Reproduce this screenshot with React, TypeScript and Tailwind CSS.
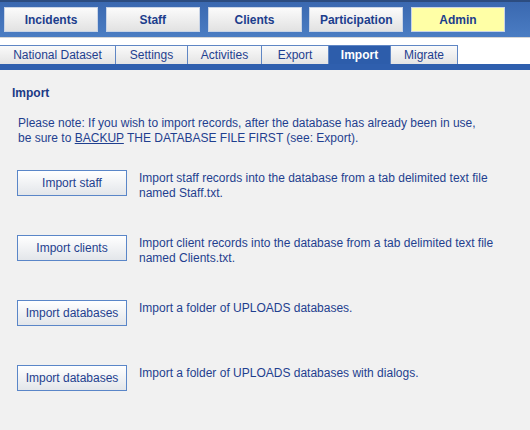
import React from 'react';

const topButtons = ['Incidents', 'Staff', 'Clients', 'Participation', 'Admin'];

const tabs = [
  { label: 'National Dataset', w: 'w-[116px]' },
  { label: 'Settings', w: 'w-[72px]' },
  { label: 'Activities', w: 'w-[74px]' },
  { label: 'Export', w: 'w-[67px]' },
  { label: 'Import', w: 'w-[62px]' },
  { label: 'Migrate', w: 'w-[67px]' },
];

const imports = [
  {
    button: 'Import staff',
    text: 'Import staff records into the database from a tab delimited text file named Staff.txt.',
  },
  {
    button: 'Import clients',
    text: 'Import client records into the database from a tab delimited text file named Clients.txt.',
  },
  { button: 'Import databases', text: 'Import a folder of UPLOADS databases.' },
  { button: 'Import databases', text: 'Import a folder of UPLOADS databases with dialogs.' },
];

const App: React.FC = () => {
  return (
    <div
      className="w-[530px] h-[430px] overflow-hidden bg-[#f1f1f1] text-[#1f3f8f]"
      style={{ fontFamily: '"Liberation Sans", Arial, sans-serif' }}
    >
      {/* main menu */}
      <div className="h-[37px] border-t-2 border-[#2c4c80] bg-gradient-to-b from-[#3a68b0] to-[#4b7dc3] flex items-start pt-[5px] pl-[4px] gap-[7.75px]">
        {topButtons.map((b) => (
          <div
            key={b}
            className={`w-[94px] h-[25px] flex items-center justify-center text-[12px] font-bold text-[#1c3d8c] border border-[#c9d4e6] ${
              b === 'Admin' ? 'bg-[#ffffa6]' : 'bg-gradient-to-b from-[#fbfbfb] to-[#e2e2e2]'
            }`}
          >
            {b}
          </div>
        ))}
      </div>
      <div className="h-[8px] bg-white border-t border-[#d6d6d6]" />

      {/* sub tabs */}
      <div className="flex h-[19px] bg-white">
        {tabs.map((t) => (
          <div
            key={t.label}
            className={`${t.w} h-full flex items-center justify-center text-[12px] border-r border-t border-[#5f86c4] ${
              t.label === 'Import'
                ? 'bg-[#2d5dab] text-white font-bold'
                : 'bg-gradient-to-b from-[#fafafa] to-[#e4e4e4] text-[#1f3f8f]'
            }`}
          >
            {t.label}
          </div>
        ))}
      </div>
      <div className="h-[6px] bg-[#2f5fae]" />

      {/* content */}
      <div className="pl-[12px] pt-[14px]">
        <div className="text-[12px] font-bold text-[#1c3a86]">Import</div>
        <p className="mt-[14px] ml-[6px] text-[12px] leading-[15px]">
          Please note: If you wish to import records, after the database has already been in use,
          <br />
          be sure to <span className="underline">BACKUP</span> THE DATABASE FILE FIRST (see: Export).
        </p>

        <div className="mt-[24px] ml-[5px] flex flex-col gap-[39px]">
          {imports.map((item, i) => (
            <div key={i} className="h-[26px] flex items-start gap-[12px]">
              <div className="w-[110px] h-[26px] shrink-0 flex items-center justify-center text-[12px] text-[#1f3f8f] border border-[#5a86c8] bg-gradient-to-b from-[#ffffff] to-[#e3e6ea]">
                {item.button}
              </div>
              <div className="w-[360px] text-[12px] leading-[15px] pt-[1px]">{item.text}</div>
            </div>
          ))}
        </div>
      </div>
    </div>
  );
};

export default App;
